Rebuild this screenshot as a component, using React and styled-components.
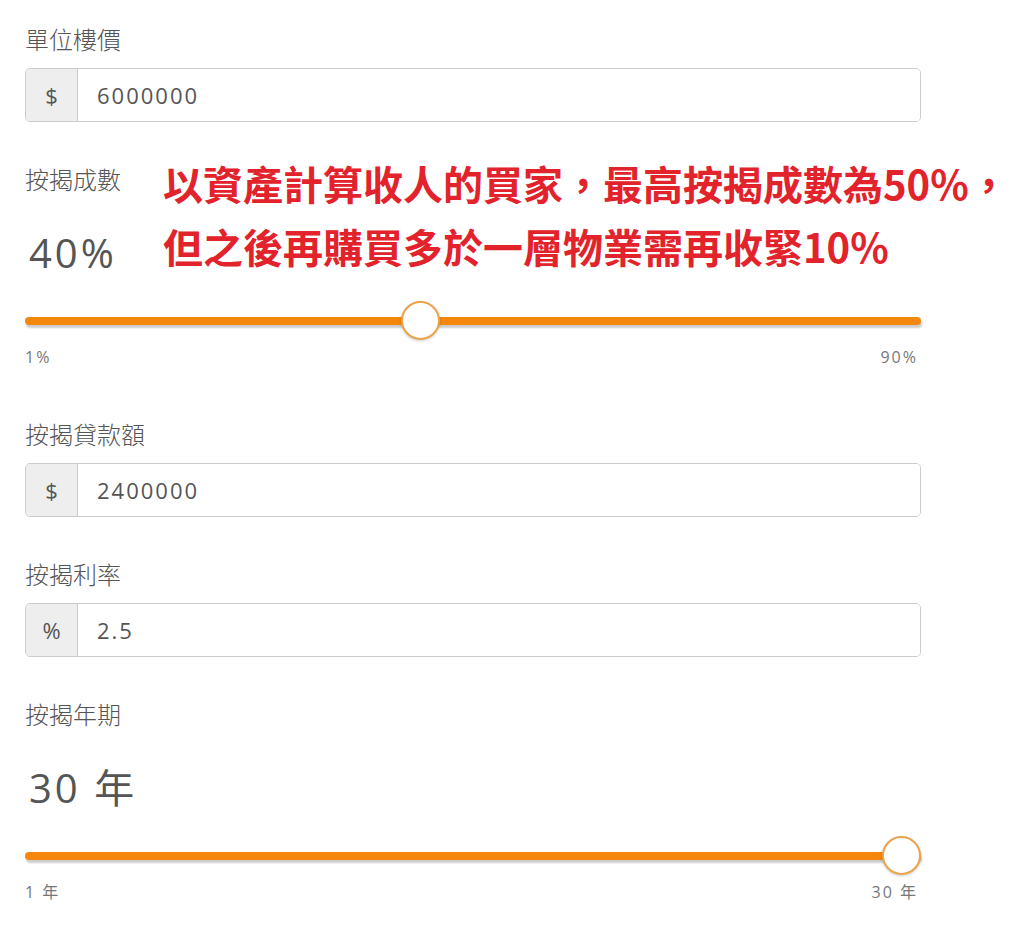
import React from "react";
import styled, { createGlobalStyle } from "styled-components";

const GlobalStyle = createGlobalStyle`
  body {
    margin: 0;
    background: #ffffff;
    font-family: "Open Sans", "Noto Sans CJK TC", sans-serif;
  }
`;

const InputField = ({ label, addon, value }) => (
  <Field>
    <Label>{label}</Label>
    <InputGroup>
      <Addon>{addon}</Addon>
      <Input defaultValue={value} />
    </InputGroup>
  </Field>
);

const SliderField = ({ label, display, min, max, value, minText, maxText }) => {
  const p = (value - min) / (max - min);
  return (
    <Field>
      <Label>{label}</Label>
      <BigValue>{display}</BigValue>
      <Slider>
        <Track />
        <Knob style={{ left: `calc(${p} * (100% - 39px))` }} />
      </Slider>
      <Scale>
        <span>{minText}</span>
        <span>{maxText}</span>
      </Scale>
    </Field>
  );
};

const App = () => {
  return (
    <Page>
      <GlobalStyle />
      <InputField label="單位樓價" addon="$" value="6000000" />
      <SliderField
        label="按揭成數"
        display="40%"
        min={1}
        max={90}
        value={40}
        minText="1%"
        maxText="90%"
      />
      <InputField label="按揭貸款額" addon="$" value="2400000" />
      <InputField label="按揭利率" addon="%" value="2.5" />
      <SliderField
        label="按揭年期"
        display="30 年"
        min={1}
        max={30}
        value={30}
        minText="1 年"
        maxText="30 年"
      />
      <Note>
        以資產計算收人的買家，最高按揭成數為50%，
        <br />
        但之後再購買多於一層物業需再收緊10%
      </Note>
    </Page>
  );
};

const Page = styled.div`
  position: relative;
  display: flex;
  flex-direction: column;
  width: 896px;
  padding: 23px 0 0 25px;
  color: #555555;
`;

const Field = styled.div`
  display: flex;
  flex-direction: column;
  margin-bottom: 41px;
`;

const Label = styled.div`
  font-family: "Noto Sans CJK TC", sans-serif;
  font-weight: 300;
  font-size: 24px;
  line-height: 32px;
  color: #555555;
  margin-bottom: 13px;
`;

const InputGroup = styled.div`
  display: flex;
  height: 54px;
  border: 1px solid #cccccc;
  border-radius: 5px;
  overflow: hidden;
  box-sizing: border-box;
`;

const Addon = styled.div`
  width: 51px;
  flex: none;
  display: flex;
  align-items: center;
  justify-content: center;
  background: #eeeeee;
  border-right: 1px solid #cccccc;
  font-size: 22px;
  color: #555555;
`;

const Input = styled.input`
  flex: 1;
  border: none;
  outline: none;
  padding: 0 0 0 19px;
  font-family: "Open Sans", "Noto Sans CJK TC", sans-serif;
  font-size: 22px;
  letter-spacing: 2px;
  color: #555555;
  background: #ffffff;
`;

const BigValue = styled.div`
  font-family: "Open Sans", "Noto Sans CJK TC", sans-serif;
  font-size: 40px;
  line-height: 50px;
  letter-spacing: 3px;
  color: #555555;
  margin: 20px 0 23px 4px;
`;

const Slider = styled.div`
  position: relative;
  height: 40px;
  display: flex;
  align-items: center;
`;

const Track = styled.div`
  width: 100%;
  height: 8px;
  border-radius: 4px;
  background: #f5870d;
  box-shadow: 1px 3px 2px rgba(0, 0, 0, 0.2);
`;

const Knob = styled.div`
  position: absolute;
  top: 0;
  width: 39px;
  height: 39px;
  box-sizing: border-box;
  border-radius: 50%;
  background: #ffffff;
  border: 2px solid #eba44c;
  box-shadow: 0 1px 3px rgba(0, 0, 0, 0.2);
`;

const Scale = styled.div`
  display: flex;
  justify-content: space-between;
  margin-top: 6px;
  margin-bottom: 10px;
  padding-right: 3px;
  font-family: "Open Sans", "Noto Sans CJK TC", sans-serif;
  font-size: 16px;
  line-height: 20px;
  letter-spacing: 2px;
  color: #777777;
`;

const Note = styled.div`
  position: absolute;
  left: 163px;
  top: 152px;
  font-family: "Noto Sans CJK TC", sans-serif;
  font-weight: 700;
  font-size: 40px;
  line-height: 63px;
  color: #e2232b;
  white-space: nowrap;
`;

export default App;
